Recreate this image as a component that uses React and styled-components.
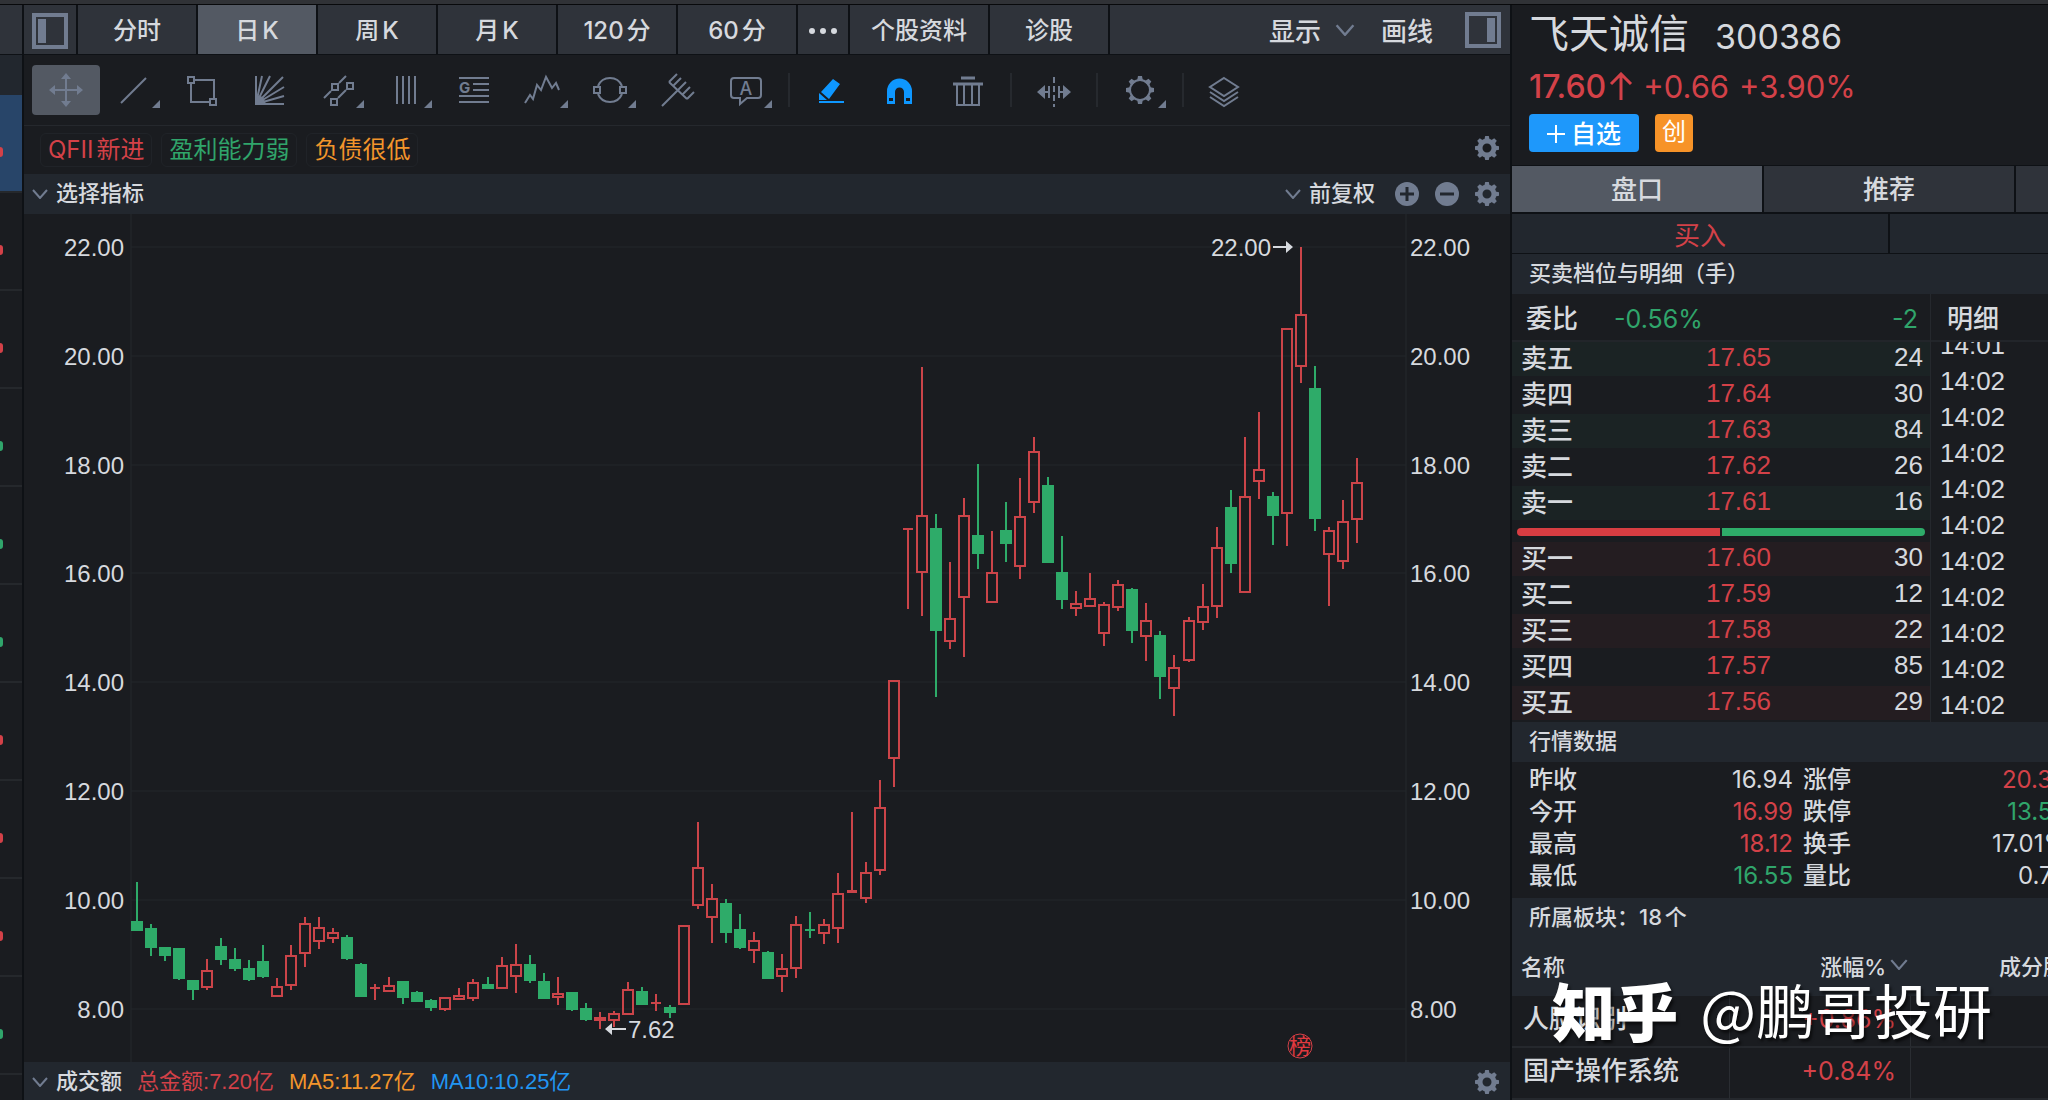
import React from "react"
import styled, { createGlobalStyle, css } from "styled-components"

const colors = {
  bg: "#1a1c20",
  bar: "#22272e",
  tab: "#2f333a",
  active: "#535963",
  line: "#0e1115",
  grid: "#25282d",
  text: "#d6d9de",
  icon: "#717c90",
  red: "#d34148",
  green: "#30a56b",
  orange: "#f2952b",
  blue: "#2196f3",
}

const uiFont = `Inter, "Noto Sans CJK SC", sans-serif`
const numFont = `"Liberation Sans", "Noto Sans CJK SC", sans-serif`

const GlobalStyle = createGlobalStyle`
  * {
    box-sizing: border-box;
  }

  body {
    margin: 0;
    background: ${colors.bg};
    color: ${colors.text};
    font-family: ${uiFont};
    font-size: 24px;
    text-autospace: normal;
  }

  button {
    border: 0;
    padding: 0;
    background: transparent;
    color: inherit;
    font: inherit;
    cursor: pointer;
  }

  svg {
    display: block;
  }

  table {
    border-collapse: separate;
    border-spacing: 0;
    table-layout: fixed;
  }

  td, th {
    padding: 0;
    font-weight: 400;
    text-align: left;
    white-space: nowrap;
  }

  th {
    font-weight: 500;
  }
`

const Page = styled.div`
  position: relative;
  display: flex;
  flex-direction: column;
  height: 100vh;
  overflow: hidden;
`

const TitleStrip = styled.div`
  flex: none;
  height: 5px;
  background: #303236;
  border-bottom: 1px solid #08090b;
`

const Columns = styled.div`
  display: grid;
  grid-template-columns: 22px minmax(0, 1fr) 536px;
  gap: 2px;
  background: ${colors.line};
  flex: 1;
  min-height: 0;
`

/* ---------- left strip: edge of the watch list ---------- */

const WatchStrip = styled.aside`
  display: flex;
  flex-direction: column;
  background: ${colors.bg};
  overflow: hidden;
`

const WatchHead = styled.div`
  flex: none;
  height: ${p => p.$height}px;
  background: ${p => p.$bg};
  border-bottom: ${p => (p.$line ? `1px solid ${colors.line}` : 0)};
`

const WatchRow = styled.div`
  flex: none;
  display: flex;
  align-items: center;
  height: 98px;
  padding-top: 18px;
  background: ${p => (p.$active ? "#284569" : "transparent")};
  border-bottom: 2px solid #25282c;

  &::before {
    content: "";
    width: 3px;
    height: 10px;
    border-radius: 0 3px 3px 0;
    background: ${p => (p.$up ? colors.red : colors.green)};
  }
`

/* ---------- centre: chart ---------- */

const Main = styled.main`
  display: flex;
  flex-direction: column;
  background: ${colors.bg};
  min-width: 0;
  overflow: hidden;
`

const PeriodBar = styled.nav`
  flex: none;
  display: flex;
  height: 50px;
  background: ${colors.tab};
  border-bottom: 1px solid ${colors.line};
  font-weight: 500;
`

const PeriodTab = styled.button`
  flex: none;
  width: ${p => p.$width || 120}px;
  display: flex;
  align-items: center;
  justify-content: center;
  padding-top: 2px;
  line-height: 46px;
  background: ${p => (p.$active ? colors.active : "transparent")};
  border-right: 2px solid ${colors.line};
`

const PeriodActions = styled.div`
  margin-left: auto;
  display: flex;
  align-items: center;
  padding-right: 9px;
  font-size: 26px;
`

const ActionButton = styled.button`
  display: flex;
  align-items: center;
  gap: 14px;
  margin-right: ${p => p.$after}px;
`

const Toolbar = styled.div`
  flex: none;
  display: flex;
  align-items: center;
  height: 71px;
  padding-left: 8px;
  border-bottom: 1px solid ${colors.grid};
`

const ToolButton = styled.button`
  flex: none;
  border-radius: 4px;
  color: ${p => (p.$on ? "#0e97ff" : colors.icon)};
  ${p =>
    p.$active &&
    css`
      background: ${colors.active};
    `}
`

const ToolDivider = styled.span`
  width: 2px;
  height: 34px;
  margin: 0 8px;
  background: #26292e;
`

const TagRow = styled.div`
  flex: none;
  display: flex;
  align-items: center;
  gap: 9px;
  height: 48px;
  padding: 0 11px 0 16px;

  & > button {
    margin-left: auto;
    margin-bottom: 4px;
  }
`

const Tag = styled.span`
  height: 34px;
  padding: 0 7px;
  border: 1px solid #202328;
  border-radius: 6px;
  line-height: 32px;
  color: ${p => p.$color};
`

const IndicatorBar = styled.div`
  flex: none;
  display: flex;
  align-items: center;
  height: 40px;
  padding: 0 11px 0 8px;
  background: ${colors.bar};
  font-family: ${numFont};
  font-size: 22px;
  line-height: 38px;
  text-autospace: no-autospace;
`

const BarButton = styled.button`
  display: flex;
  align-items: center;
  gap: 8px;
  font-weight: 500;
`

const BarTools = styled.div`
  margin-left: auto;
  display: flex;
  align-items: center;
  gap: 16px;

  & > ${BarButton} {
    margin-right: 4px;
  }
`

const Reading = styled.span`
  margin-left: 15px;
  color: ${p => p.$color};
`

const ChartSvg = styled.svg`
  flex: none;
  width: 100%;
  height: auto;
  font-family: ${numFont};
  font-size: 24px;
`

/* ---------- right: quote panel ---------- */

const Quote = styled.aside`
  background: ${colors.bg};
  overflow: hidden;
`

const QuoteHead = styled.header`
  height: 161px;
  padding: 0 17px;
  border-bottom: 1px solid ${colors.line};
`

const NameLine = styled.h1`
  display: flex;
  align-items: center;
  gap: 26px;
  margin: 0;
  height: 58px;
  font-size: 40px;
  line-height: 56px;
  font-weight: 400;
`

const Code = styled.span`
  padding-top: 6px;
  font-size: 34px;
`

const PriceLine = styled.div`
  display: flex;
  align-items: center;
  gap: 10px;
  height: 46px;
  font-size: 31px;
  color: ${colors.red};
`

const LastPrice = styled.strong`
  display: flex;
  align-items: center;
  gap: 3px;
  font-size: 32px;
  font-weight: 500;
`

const HeadActions = styled.div`
  display: flex;
  gap: 16px;
  padding-top: 5px;
`

const FollowButton = styled.button`
  display: flex;
  align-items: center;
  justify-content: center;
  gap: 6px;
  width: 110px;
  height: 38px;
  padding-top: 2px;
  border-radius: 4px;
  background: #1e98fb;
  color: #fff;
  font-size: 25px;
  font-weight: 500;
  line-height: 36px;
`

const BoardBadge = styled.span`
  width: 38px;
  height: 38px;
  border-radius: 4px;
  background: #f79328;
  color: #fff;
  font-size: 24px;
  line-height: 36px;
  text-align: center;
`

const QuoteTabs = styled.div`
  display: flex;
  height: 48px;
  border-bottom: 2px solid ${colors.line};
`

const QuoteTab = styled.button`
  flex: none;
  width: 252px;
  padding-top: 2px;
  background: ${p => (p.$active ? colors.active : colors.tab)};
  border-right: 2px solid ${colors.line};
  font-size: 26px;
  font-weight: 500;
  line-height: 44px;
`

const TradeRow = styled.div`
  display: flex;
  height: 40px;
  background: ${colors.bar};
  border-bottom: 1px solid ${colors.line};
`

const TradeButton = styled.button`
  flex: none;
  width: 378px;
  padding-top: 5px;
  border-right: 2px solid ${colors.line};
  color: ${p => p.$color};
  font-size: 26px;
  line-height: 34px;
`

const SectionTitle = styled.h2`
  margin: 0;
  padding-left: 17px;
  height: 40px;
  background: ${colors.bar};
  font-size: 22px;
  line-height: 38px;
  font-weight: 500;
  white-space: nowrap;
`

const Depth = styled.section`
  display: grid;
  grid-template-columns: 418px minmax(0, 1fr);
`

const DepthHead = styled.div`
  display: flex;
  align-items: center;
  height: 48px;
  padding: 4px 12px 0 14px;
  border-bottom: 2px solid #22252a;
  font-size: 26px;
  font-weight: 500;
  line-height: 42px;

  span {
    margin-left: 36px;
    font-size: 25px;
    font-weight: 400;
    color: ${colors.green};
  }

  span:last-child {
    margin-left: auto;
  }
`

const BookTable = styled.table`
  width: 100%;
  font-family: ${numFont};
  font-size: 26px;
  line-height: 34px;

  th,
  td {
    height: 36px;
    border-bottom: 2px solid ${colors.bg};
    text-align: right;
  }

  th {
    width: 150px;
    padding-left: 9px;
    text-align: left;
  }

  td {
    padding-bottom: 4px;
    line-height: 30px;
  }

  td:nth-child(2) {
    width: 109px;
    color: ${colors.red};
  }

  td:nth-child(3) {
    padding-right: 7px;
  }

  tr:nth-child(odd) {
    background: ${p => (p.$side === "sell" ? "#1b2324" : "#241d21")};
  }
`

const RatioBar = styled.div`
  display: flex;
  gap: 2px;
  padding: 6px 5px;
`

const RatioPart = styled.span`
  flex: 1;
  height: 8px;
  background: ${p => p.$color};

  &:first-child {
    border-radius: 4px 0 0 4px;
  }

  &:last-child {
    border-radius: 0 4px 4px 0;
  }
`

const DepthSide = styled.div`
  display: flex;
  flex-direction: column;
  border-left: 1px solid ${colors.grid};

  ${DepthHead} {
    padding-left: 16px;
  }
`

const TickList = styled.ul`
  display: flex;
  flex-direction: column;
  justify-content: flex-end;
  height: 380px;
  margin: 0;
  padding: 0 0 0 9px;
  overflow: hidden;
  list-style: none;
  font-family: ${numFont};
  font-size: 26px;

  li {
    flex: none;
    height: 36px;
    line-height: 38px;
  }
`

const StatsWrap = styled.div`
  padding: 2px 0 6px 17px;
`

const StatsTable = styled.table`
  width: 538px;
  line-height: 32px;

  th {
    width: 74px;
  }

  td {
    text-align: right;
  }

  th:nth-child(3) {
    width: 84px;
    padding-left: 10px;
  }
`

const StatValue = styled.td`
  color: ${p => p.$color || colors.text};
`

const SectorTable = styled.table`
  width: 620px;
  font-size: 26px;

  thead th {
    height: 58px;
    padding-bottom: 5px;
    background: ${colors.bar};
    font-size: 22px;
  }

  th:first-child {
    width: 218px;
    padding-left: 9px;
  }

  th:nth-child(2) {
    width: 181px;
  }

  th:nth-child(3) {
    padding-left: 88px;
  }

  td {
    height: 52px;
    padding: 0 14px 4px 11px;
    border-right: 1px solid #2a2d32;
    border-bottom: 2px solid #25282d;
    font-weight: 500;
    line-height: 44px;
  }

  td:nth-child(2) {
    color: ${colors.red};
    font-size: 25px;
    font-weight: 400;
    text-align: right;
  }
`

const SortLabel = styled.button`
  display: flex;
  align-items: center;
  justify-content: flex-end;
  gap: 4px;
  width: 178px;
`

const Watermark = styled.div`
  position: absolute;
  right: 56px;
  bottom: 51px;
  display: flex;
  gap: 22px;
  color: #fff;
  font-family: "Noto Sans CJK SC", sans-serif;
  font-size: 59px;
  line-height: 80px;
  text-shadow: 2px 3px 3px rgba(0, 0, 0, 0.6);
  white-space: nowrap;
  pointer-events: none;

  strong {
    font-size: 63px;
    font-weight: 900;
  }
`

/* ---------- icons ---------- */

const Chevron = ({ width = 16, height = 10 }) => (
  <svg width={width} height={height} viewBox="0 0 16 10" aria-hidden="true">
    <path d="M1 1l7 8 7-8" fill="none" stroke={colors.icon} strokeWidth="2" />
  </svg>
)

const teeth = [0, 45, 90, 135, 180, 225, 270, 315]

const Gear = () => (
  <svg width="24" height="24" viewBox="-12 -12 24 24" aria-hidden="true">
    <circle r="7" fill="none" stroke={colors.icon} strokeWidth="5" />
    {teeth.map(a => (
      <path
        key={a}
        d="M-2.6 -8.5L-1.8 -12H1.8L2.6 -8.5z"
        fill={colors.icon}
        transform={`rotate(${a})`}
      />
    ))}
  </svg>
)

const RoundIcon = ({ plus }) => (
  <svg width="24" height="24" viewBox="0 0 24 24" aria-hidden="true">
    <circle cx="12" cy="12" r="12" fill={colors.icon} />
    <path
      d={plus ? "M5 12h14M12 5v14" : "M5 12h14"}
      stroke={colors.bar}
      strokeWidth="3"
    />
  </svg>
)

const SidebarIcon = ({ right }) => (
  <svg width="36" height="36" viewBox="0 0 36 36" aria-hidden="true">
    <rect
      x="2"
      y="2"
      width="32"
      height="32"
      fill="none"
      stroke={colors.icon}
      strokeWidth="4"
    />
    <rect x={right ? 22 : 6} y="6" width="8" height="24" fill={colors.icon} />
  </svg>
)

const toolIcons = {
  move: (
    <>
      <path d="M34 12v26M21 25h26" />
      <path
        d="M34 8l5 6H29zM34 42l5-6H29zM17 25l6-5v10zM51 25l-6-5v10z"
        fill="currentColor"
        stroke="none"
      />
    </>
  ),
  line: <path d="M21 38L46 13" />,
  rect: (
    <>
      <path d="M26 15h20v18M42 37H23V18" />
      <path d="M20 12h6v6h-6zM42 34h6v6h-6z" />
    </>
  ),
  fan: (
    <>
      <path d="M20 11v28h28M20 39l6-28M20 39l14-28M20 39L47 12M20 39l28-17M20 39l28-8" />
      <path d="M20 30l7 2 3 7H20z" fill="currentColor" stroke="none" />
    </>
  ),
  channel: (
    <>
      <path d="M20 33l7-7M35 18l7-7M34 33l8-8" />
      <path d="M28 19h6v6h-6zM27 34h6v6h-6zM43 18h6v6h-6z" />
    </>
  ),
  columns: <path d="M25 11v28M31 11v28M37 11v28M43 11v28" />,
  golden: (
    <>
      <path d="M19 13h30M33 19h16M33 25h16M19 31h30M19 37h30" />
      <text x="19" y="28" fontSize="15" fontWeight="700" fill="currentColor" stroke="none">
        G
      </text>
    </>
  ),
  wave: <path d="M17 38l5-8 3 4 4-14 4 5 5-13 6 11 4-5 3 7" />,
  circle: (
    <>
      <path d="M22 21a13 13 0 0 1 24 0M22 29a13 13 0 0 0 24 0" />
      <path d="M18 22h6v6h-6zM44 22h6v6h-6z" />
    </>
  ),
  fork: (
    <path d="M18 41l24-24M25 17l18 17M25 17l8-8M29 21l8-8M38 30l8-8M43 34l7-7" />
  ),
  note: (
    <>
      <path d="M22 13h24a3 3 0 0 1 3 3v14a3 3 0 0 1-3 3H35l-7 6v-6h-6a3 3 0 0 1-3-3V16a3 3 0 0 1 3-3z" />
      <text
        x="34"
        y="30"
        fontSize="18"
        fontWeight="500"
        textAnchor="middle"
        fill="currentColor"
        stroke="none"
      >
        A
      </text>
    </>
  ),
  eraser: (
    <>
      <path d="M35 14l7 5-11 15-8-7zM21 28l8 7h-8z" fill="currentColor" stroke="none" />
      <path d="M21 37h25" />
    </>
  ),
  magnet: (
    <>
      <path
        d="M21 39V26a12.5 12.5 0 0 1 25 0v13h-8V27a4.5 4.5 0 0 0-9 0v12z"
        fill="currentColor"
        stroke="none"
      />
      <path d="M23 33h4v3h-4zM40 33h4v3h-4z" fill={colors.bg} stroke="none" />
    </>
  ),
  trash: (
    <>
      <path d="M27 13h14M19 19h30" strokeWidth="3" />
      <path d="M23 20v20h22V20M30 20v20M38 20v20" />
    </>
  ),
  flip: (
    <>
      <path d="M34 12v30" strokeDasharray="6 3" />
      <path d="M29 21v12M39 21v12M24 27h5M39 27h5" />
      <path d="M17 27l8-7v14zM51 27l-8-7v14z" fill="currentColor" stroke="none" />
    </>
  ),
  settings: (
    <g transform="translate(34 25)">
      <circle r="10" />
      {teeth.map(a => (
        <path
          key={a}
          d="M-3 -9L-2 -14H2L3 -9z"
          fill="currentColor"
          stroke="none"
          transform={`rotate(${a})`}
        />
      ))}
    </g>
  ),
  layers: (
    <path d="M32 13l14 9-14 9-14-9zM18 27l14 9 14-9M18 32l14 9 14-9" />
  ),
}

const ToolIcon = ({ name, menu }) => (
  <svg
    width="68"
    height="50"
    viewBox="0 0 68 50"
    fill="none"
    stroke="currentColor"
    strokeWidth="2"
    aria-hidden="true"
  >
    {toolIcons[name]}
    {menu && <path d="M60 35v8h-8z" fill="currentColor" stroke="none" />}
  </svg>
)

/* ---------- data ---------- */

const watchRows = [1, 1, 1, 0, 0, 0, 1, 1, 1, 0]

const tools = [
  { name: "move", label: "移动", active: true },
  { name: "line", label: "线段", menu: true },
  { name: "rect", label: "矩形" },
  { name: "fan", label: "扇形线" },
  { name: "channel", label: "平行线", menu: true },
  { name: "columns", label: "周期线", menu: true },
  { name: "golden", label: "黄金分割" },
  { name: "wave", label: "波浪线", menu: true },
  { name: "circle", label: "圆形", menu: true },
  { name: "fork", label: "叉形线" },
  { name: "note", label: "文字", menu: true },
  null,
  { name: "eraser", label: "画笔", on: true },
  { name: "magnet", label: "吸附", on: true },
  { name: "trash", label: "删除" },
  null,
  { name: "flip", label: "翻转" },
  null,
  { name: "settings", label: "设置", menu: true },
  null,
  { name: "layers", label: "图层" },
]

// direction, high, body top, body bottom, low
const candles = [
  ["g", 668, 707, 717, 717],
  ["g", 710, 714, 734, 742],
  ["g", 733, 733, 742, 747],
  ["g", 734, 734, 765, 766],
  ["g", 766, 766, 776, 786],
  ["r", 745, 756, 774, 776],
  ["g", 724, 732, 746, 751],
  ["g", 734, 745, 755, 757],
  ["g", 746, 754, 766, 767],
  ["g", 731, 747, 763, 764],
  ["r", 764, 772, 783, 783],
  ["r", 731, 741, 772, 776],
  ["r", 703, 709, 740, 753],
  ["r", 703, 713, 728, 735],
  ["r", 714, 718, 725, 729],
  ["g", 721, 723, 745, 746],
  ["g", 749, 750, 783, 783],
  ["r", 770, 773, 775, 786],
  ["r", 763, 771, 778, 778],
  ["g", 767, 767, 784, 790],
  ["g", 777, 778, 788, 788],
  ["g", 785, 786, 794, 797],
  ["r", 783, 783, 796, 797],
  ["r", 774, 781, 786, 786],
  ["r", 765, 768, 785, 787],
  ["g", 763, 770, 775, 775],
  ["r", 743, 751, 775, 775],
  ["r", 730, 750, 763, 779],
  ["g", 741, 750, 767, 769],
  ["g", 759, 767, 785, 785],
  ["r", 763, 779, 784, 791],
  ["g", 778, 778, 796, 797],
  ["g", 789, 794, 806, 807],
  ["r", 798, 803, 807, 815],
  ["r", 797, 799, 807, 813],
  ["r", 768, 775, 801, 801],
  ["g", 773, 777, 791, 791],
  ["r", 780, 788, 790, 797],
  ["g", 791, 793, 799, 804],
  ["r", 711, 711, 791, 791],
  ["r", 608, 653, 692, 695],
  ["r", 670, 684, 704, 729],
  ["g", 685, 689, 719, 729],
  ["g", 700, 715, 734, 735],
  ["r", 718, 726, 737, 749],
  ["g", 737, 738, 765, 765],
  ["r", 740, 754, 763, 778],
  ["r", 702, 710, 755, 764],
  ["g", 698, 715, 717, 724],
  ["r", 705, 710, 720, 730],
  ["r", 659, 679, 715, 729],
  ["r", 598, 676, 679, 679],
  ["r", 648, 658, 685, 689],
  ["r", 566, 593, 657, 661],
  ["r", 466, 466, 545, 573],
  ["r", 314, 314, 316, 395],
  ["r", 153, 301, 359, 402],
  ["g", 300, 314, 417, 483],
  ["r", 348, 404, 428, 435],
  ["r", 284, 301, 384, 443],
  ["g", 250, 321, 340, 355],
  ["r", 317, 358, 389, 389],
  ["g", 288, 316, 330, 348],
  ["r", 264, 302, 353, 365],
  ["r", 223, 237, 289, 299],
  ["g", 263, 271, 349, 349],
  ["g", 322, 358, 386, 395],
  ["r", 377, 389, 395, 402],
  ["r", 359, 384, 393, 393],
  ["r", 388, 390, 420, 432],
  ["r", 366, 370, 394, 397],
  ["g", 374, 375, 417, 429],
  ["r", 389, 406, 423, 447],
  ["g", 417, 421, 463, 485],
  ["r", 441, 453, 475, 502],
  ["r", 403, 406, 447, 448],
  ["r", 370, 392, 409, 416],
  ["r", 313, 333, 393, 404],
  ["g", 276, 293, 350, 359],
  ["r", 223, 282, 379, 379],
  ["r", 198, 255, 268, 285],
  ["g", 278, 282, 302, 331],
  ["r", 114, 114, 300, 332],
  ["r", 33, 100, 153, 169],
  ["g", 152, 174, 305, 317],
  ["r", 313, 316, 341, 392],
  ["r", 286, 307, 348, 355],
  ["r", 244, 268, 306, 329],
]

const prices = [22, 20, 18, 16, 14, 12, 10, 8]
const priceY = price => Math.round(33 + (22 - price) * 54.4)

const sellRows = [
  ["卖五", "17.65", 24],
  ["卖四", "17.64", 30],
  ["卖三", "17.63", 84],
  ["卖二", "17.62", 26],
  ["卖一", "17.61", 16],
]

const buyRows = [
  ["买一", "17.60", 30],
  ["买二", "17.59", 12],
  ["买三", "17.58", 22],
  ["买四", "17.57", 85],
  ["买五", "17.56", 29],
]

const ticks = ["14:01", ...Array(10).fill("14:02")]

const stats = [
  ["昨收", "16.94", null, "涨停", "20.33", colors.red],
  ["今开", "16.99", colors.red, "跌停", "13.55", colors.green],
  ["最高", "18.12", colors.red, "换手", "17.01%", null],
  ["最低", "16.55", colors.green, "量比", "0.75", null],
]

/* ---------- parts ---------- */

const Candle = ({ x, data }) => {
  const [dir, high, top, bottom, low] = data
  const color = dir === "g" ? "#2eab69" : "#cb4449"
  const height = bottom - top
  return (
    <g fill={color}>
      <rect x={x - 1} y={high} width="2" height={top - high} />
      <rect x={x - 1} y={bottom} width="2" height={low - bottom} />
      {dir === "g" || height < 4 ? (
        <rect
          x={height < 4 ? x - 5 : x - 6}
          y={top}
          width={height < 4 ? 10 : 12}
          height={height}
        />
      ) : (
        <rect
          x={x - 5}
          y={top + 1}
          width="10"
          height={height - 2}
          fill="none"
          stroke={color}
          strokeWidth="2"
        />
      )}
    </g>
  )
}

const Chart = () => (
  <ChartSvg viewBox="0 0 1486 848" role="img" aria-label="飞天诚信 日K">
    <path d="M107 0v848M1382 0v848" stroke={colors.grid} />
    {prices.map(price => (
      <g key={price}>
        <path d={`M107 ${priceY(price)}H1382`} stroke="#23262a" />
        <text x="100" y={priceY(price) + 9} textAnchor="end" fill={colors.text}>
          {price.toFixed(2)}
        </text>
        <text x="1386" y={priceY(price) + 9} fill={colors.text}>
          {price.toFixed(2)}
        </text>
      </g>
    ))}
    {candles.map((data, i) => (
      <Candle key={i} x={Math.round(113 + i * 14.02)} data={data} />
    ))}
    <g fill={colors.text}>
      <text x="1187" y="42">
        22.00
      </text>
      <path d="M1249 32h13v-5l7 6-7 6v-5h-13z" />
      <text x="604" y="824">
        7.62
      </text>
      <path d="M602 814h-14v-5l-7 6 7 6v-5h14z" />
    </g>
    <circle cx="1276" cy="832" r="12" fill="none" stroke={colors.red} strokeWidth="1" />
    <text x="1276" y="840" fontSize="22" textAnchor="middle" fill="#e0393f">
      榜
    </text>
  </ChartSvg>
)

const Book = ({ side, rows }) => (
  <BookTable $side={side}>
    <tbody>
      {rows.map(([label, price, count]) => (
        <tr key={label}>
          <th scope="row">{label}</th>
          <td>{price}</td>
          <td>{count}</td>
        </tr>
      ))}
    </tbody>
  </BookTable>
)

const ChartPane = () => (
  <Main>
    <PeriodBar>
      <PeriodTab $width={54} aria-label="左侧栏">
        <SidebarIcon />
      </PeriodTab>
      <PeriodTab>分时</PeriodTab>
      <PeriodTab $active>日K</PeriodTab>
      <PeriodTab>周K</PeriodTab>
      <PeriodTab>月K</PeriodTab>
      <PeriodTab>120分</PeriodTab>
      <PeriodTab>60分</PeriodTab>
      <PeriodTab $width={52} aria-label="更多周期">
        <svg width="30" height="6" viewBox="0 0 30 6" fill={colors.text}>
          <circle cx="4" cy="3" r="3" />
          <circle cx="15" cy="3" r="3" />
          <circle cx="26" cy="3" r="3" />
        </svg>
      </PeriodTab>
      <PeriodTab $width={140}>个股资料</PeriodTab>
      <PeriodTab>诊股</PeriodTab>
      <PeriodActions>
        <ActionButton $after={26}>
          显示
          <Chevron width={20} height={12} />
        </ActionButton>
        <ActionButton $after={32}>画线</ActionButton>
        <ActionButton $after={0} aria-label="右侧栏">
          <SidebarIcon right />
        </ActionButton>
      </PeriodActions>
    </PeriodBar>

    <Toolbar>
      {tools.map((tool, i) =>
        tool ? (
          <ToolButton
            key={tool.name}
            $active={tool.active}
            $on={tool.on}
            aria-label={tool.label}
          >
            <ToolIcon name={tool.name} menu={tool.menu} />
          </ToolButton>
        ) : (
          <ToolDivider key={i} />
        )
      )}
    </Toolbar>

    <TagRow>
      <Tag $color={colors.red}>QFII新进</Tag>
      <Tag $color={colors.green}>盈利能力弱</Tag>
      <Tag $color={colors.orange}>负债很低</Tag>
      <button aria-label="标签设置">
        <Gear />
      </button>
    </TagRow>

    <IndicatorBar>
      <BarButton>
        <Chevron />
        选择指标
      </BarButton>
      <BarTools>
        <BarButton>
          <Chevron />
          前复权
        </BarButton>
        <button aria-label="放大">
          <RoundIcon plus />
        </button>
        <button aria-label="缩小">
          <RoundIcon />
        </button>
        <button aria-label="指标设置">
          <Gear />
        </button>
      </BarTools>
    </IndicatorBar>

    <Chart />

    <IndicatorBar>
      <BarButton>
        <Chevron />
        成交额
      </BarButton>
      <Reading $color={colors.red}>总金额:7.20亿</Reading>
      <Reading $color={colors.orange}>MA5:11.27亿</Reading>
      <Reading $color={colors.blue}>MA10:10.25亿</Reading>
      <BarTools>
        <button aria-label="成交额设置">
          <Gear />
        </button>
      </BarTools>
    </IndicatorBar>
  </Main>
)

const QuotePane = () => (
  <Quote>
    <QuoteHead>
      <NameLine>
        飞天诚信
        <Code>300386</Code>
      </NameLine>
      <PriceLine>
        <LastPrice>
          17.60
          <svg width="24" height="28" viewBox="0 0 24 28" aria-hidden="true">
            <path
              d="M12 28V2M2 12L12 2l10 10"
              fill="none"
              stroke={colors.red}
              strokeWidth="3"
            />
          </svg>
        </LastPrice>
        <span>+0.66</span>
        <span>+3.90%</span>
      </PriceLine>
      <HeadActions>
        <FollowButton>
          <svg width="18" height="18" viewBox="0 0 18 18" aria-hidden="true">
            <path d="M9 0v18M0 9h18" stroke="#fff" strokeWidth="2" />
          </svg>
          自选
        </FollowButton>
        <BoardBadge>创</BoardBadge>
      </HeadActions>
    </QuoteHead>

    <QuoteTabs>
      <QuoteTab $active>盘口</QuoteTab>
      <QuoteTab>推荐</QuoteTab>
      <QuoteTab aria-label="更多" />
    </QuoteTabs>
    <TradeRow>
      <TradeButton $color={colors.red}>买入</TradeButton>
      <TradeButton $color={colors.green} aria-label="卖出" />
    </TradeRow>

    <SectionTitle>买卖档位与明细（手）</SectionTitle>
    <Depth>
      <div>
        <DepthHead>
          委比
          <span>-0.56%</span>
          <span>-2</span>
        </DepthHead>
        <Book side="sell" rows={sellRows} />
        <RatioBar>
          <RatioPart $color="#d83d42" />
          <RatioPart $color="#2eab69" />
        </RatioBar>
        <Book side="buy" rows={buyRows} />
      </div>
      <DepthSide>
        <DepthHead>明细</DepthHead>
        <TickList>
          {ticks.map((time, i) => (
            <li key={i}>{time}</li>
          ))}
        </TickList>
      </DepthSide>
    </Depth>

    <SectionTitle>行情数据</SectionTitle>
    <StatsWrap>
      <StatsTable>
        <tbody>
          {stats.map(([a, av, ac, b, bv, bc]) => (
            <tr key={a}>
              <th scope="row">{a}</th>
              <StatValue $color={ac}>{av}</StatValue>
              <th scope="row">{b}</th>
              <StatValue $color={bc}>{bv}</StatValue>
            </tr>
          ))}
        </tbody>
      </StatsTable>
    </StatsWrap>

    <SectionTitle>所属板块：18个</SectionTitle>
    <SectorTable>
      <thead>
        <tr>
          <th>名称</th>
          <th>
            <SortLabel>
              涨幅%
              <Chevron width={18} height={11} />
            </SortLabel>
          </th>
          <th>成分股</th>
        </tr>
      </thead>
      <tbody>
        <tr>
          <td>人脸识别</td>
          <td>+0.86%</td>
          <td />
        </tr>
        <tr>
          <td>国产操作系统</td>
          <td>+0.84%</td>
          <td />
        </tr>
      </tbody>
    </SectorTable>
  </Quote>
)

const App = () => (
  <Page>
    <GlobalStyle />
    <TitleStrip />
    <Columns>
      <WatchStrip>
        <WatchHead $height={50} $bg={colors.tab} $line />
        <WatchHead $height={40} $bg={colors.bar} />
        {watchRows.map((up, i) => (
          <WatchRow key={i} $up={up} $active={i === 0} />
        ))}
      </WatchStrip>
      <ChartPane />
      <QuotePane />
    </Columns>
    <Watermark>
      <strong>知乎</strong>
      <span>@鹏哥投研</span>
    </Watermark>
  </Page>
)

export default App
